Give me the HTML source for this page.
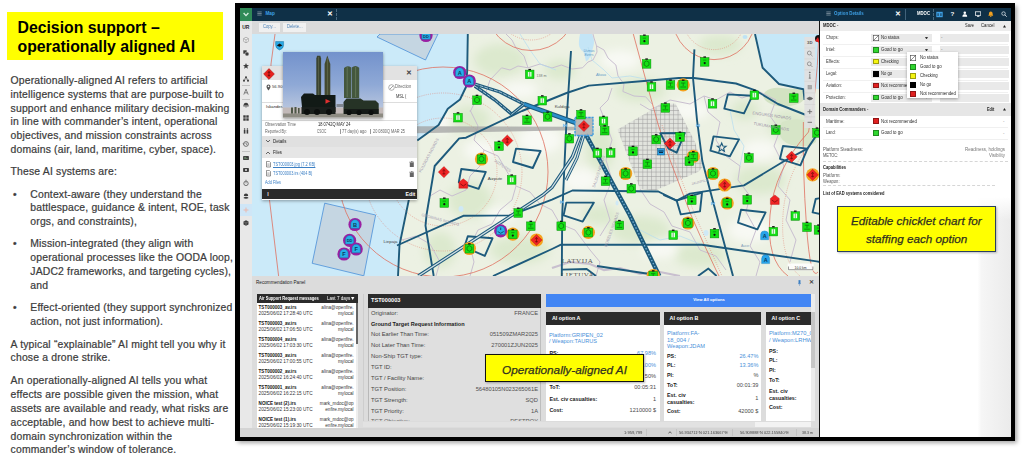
<!DOCTYPE html>
<html><head><meta charset="utf-8"><title>Decision support</title>
<style>
html,body{margin:0;padding:0;}
body{width:1024px;height:465px;overflow:hidden;background:#fff;position:relative;font-family:"Liberation Sans",sans-serif;}
.a{position:absolute;white-space:nowrap;}
#shadow{position:absolute;left:238px;top:6px;width:779px;height:437px;background:rgba(0,0,0,.35);filter:blur(2px);}
#frame{position:absolute;left:235.4px;top:3.3px;width:779.8px;height:437.4px;background:#000;}
#app{position:absolute;left:0;top:0;width:1024px;height:465px;}
#ttl{left:6.5px;top:12px;width:216px;height:48px;background:#ffff00;}
#ttl div{position:absolute;left:11px;font-weight:bold;font-size:15.8px;color:#000;white-space:nowrap;letter-spacing:0;}
.lt{position:absolute;left:10.6px;font-size:10.4px;letter-spacing:.17px;color:#3c3c3c;-webkit-text-stroke:.22px #3c3c3c;white-space:nowrap;line-height:13.85px;}
.ui{font-size:5.6px;color:#444;}

</style></head>
<body>
<div class="a" id="ttl"><div style="top:6.5px">Decision support –</div><div style="top:26px">operationally aligned AI</div></div>
<div class="a" style="left:234.600px;top:3.500px;width:0;height:437px;border-left:1px dotted #c2c2c2"></div>
<div class="lt" style="top:73.87px;left:10.6px">Operationally-aligned AI refers to artificial</div>
<div class="lt" style="top:87.72px;left:10.6px">intelligence systems that are purpose-built to</div>
<div class="lt" style="top:101.57px;left:10.6px">support and enhance military decision-making</div>
<div class="lt" style="top:115.42px;left:10.6px">in line with commander’s intent, operational</div>
<div class="lt" style="top:129.27px;left:10.6px">objectives, and mission constraints across</div>
<div class="lt" style="top:143.12px;left:10.6px">domains (air, land, maritime, cyber, space).</div>
<div class="lt" style="top:164.97px;left:10.6px">These AI systems are:</div>
<div class="lt" style="top:187.67px;left:13px">•</div>
<div class="lt" style="top:237.27px;left:13px">•</div>
<div class="lt" style="top:300.87px;left:13px">•</div>
<div class="lt" style="top:187.67px;left:30.3px">Context-aware (they understand the</div>
<div class="lt" style="top:201.47px;left:30.3px">battlespace, guidance &amp; intent, ROE, task</div>
<div class="lt" style="top:215.27px;left:30.3px">orgs, and constraints),</div>
<div class="lt" style="top:237.27px;left:30.3px">Mission-integrated (they align with</div>
<div class="lt" style="top:251.07px;left:30.3px">operational processes like the OODA loop,</div>
<div class="lt" style="top:264.87px;left:30.3px">JADC2 frameworks, and targeting cycles),</div>
<div class="lt" style="top:278.67px;left:30.3px">and</div>
<div class="lt" style="top:300.87px;left:30.3px">Effect-oriented (they support synchronized</div>
<div class="lt" style="top:314.77px;left:30.3px">action, not just information).</div>
<div class="lt" style="top:337.77px;left:10.6px">A typical “explainable” AI might tell you why it</div>
<div class="lt" style="top:351.47px;left:10.6px">chose a drone strike.</div>
<div class="lt" style="top:374.37px;left:10.6px">An operationally-aligned AI tells you what</div>
<div class="lt" style="top:388.17px;left:10.6px">effects are possible given the mission, what</div>
<div class="lt" style="top:401.97px;left:10.6px">assets are available and ready, what risks are</div>
<div class="lt" style="top:415.77px;left:10.6px">acceptable, and how best to achieve multi-</div>
<div class="lt" style="top:429.57px;left:10.6px">domain synchronization within the</div>
<div class="lt" style="top:443.37px;left:10.6px">commander’s window of tolerance.</div>
<div id="shadow"></div>
<div id="frame"></div>
<div id="app">
<svg class="a" style="left:252px;top:34px" width="568" height="242" viewBox="252 34 568 242" font-family="Liberation Sans, sans-serif">
<defs>
<pattern id="hatch" width="4.4" height="4.4" patternUnits="userSpaceOnUse"><rect width="4.4" height="4.4" fill="#dfe0dc" fill-opacity=".8"/><path d="M0 .4H4.4M.4 0V4.4" stroke="#9c9c9c" stroke-width=".55"/></pattern>
<filter id="soft" x="-20%" y="-20%" width="140%" height="140%"><feGaussianBlur stdDeviation="5"/></filter>
<g id="g"><rect x="-4.3" y="-4.1" width="8.600" height="8.600" fill="#14e014" stroke="#0a8a0a" stroke-width=".5"/><rect x="-1.300" y="-5.300" width="2.600" height="1.300" fill="#111"/></g>
<g id="gh"><use href="#g"/><path d="M0-2.800L2.400-1.400V1.400L0 2.800L-2.400 1.400V-1.400Z" fill="none" stroke="#0a6a0a" stroke-width=".7"/></g>
<g id="gw"><use href="#g"/><rect x="-1.800" y="-2.200" width="3.600" height="4.600" fill="#e8ffe8"/><path d="M0-2.200V2.400" stroke="#0a6a0a" stroke-width=".5"/></g>
<g id="gd"><use href="#g"/><circle cx="0" cy="1.400" r="1.100" fill="#111"/><path d="M-1.600-1.600H1.600" stroke="#0a6a0a" stroke-width=".6"/></g>
<g id="gt"><use href="#g"/><path d="M-2.200-1.800H2.200M0-1.800V1.200M-2.800 2.200H2.800" stroke="#0a6a0a" stroke-width=".7" fill="none"/></g>
<g id="og"><circle r="6.600" fill="#f5a21e"/></g>
<g id="rd"><path d="M0-5.600L5.600 0L0 5.600L-5.600 0Z" fill="#f02424" stroke="#b01010" stroke-width=".4"/><path d="M0-2.600V2.600M-1.400-.8L0-2.600L1.400-.8M-1.400 1.600H1.400" stroke="#7a0c0c" stroke-width=".7" fill="none"/></g>
<g id="rh"><path d="M0-5L4.400-1.600V4.400H-4.400V-1.600Z" fill="#f02424" stroke="#b01010" stroke-width=".4"/><path d="M-3 0L0 2.200L3 0" stroke="#7a0c0c" stroke-width=".8" fill="none"/></g>
<g id="pr"><circle r="6.600" fill="#9a1fa3"/><path d="M-4.200 3.800V-.6A4.200 4.200 0 0 1 4.200-.6V3.800Z" fill="#28aee8" stroke="#0d6f9a" stroke-width=".4"/></g>
<g id="ba"><path d="M-4 4.200V-.6A4 4 0 0 1 4-.6V4.200Z" fill="#28a4ea" stroke="#1580c0" stroke-width=".4"/></g>
</defs>
<rect x="252" y="34" width="568" height="242" fill="#ecf1e3"/>
<g filter="url(#soft)" fill="#dce9ce">
<ellipse cx="500" cy="60" rx="26" ry="16"/>
<ellipse cx="470" cy="120" rx="20" ry="14"/>
<ellipse cx="470" cy="200" rx="22" ry="18"/>
<ellipse cx="520" cy="250" rx="30" ry="14"/>
<ellipse cx="600" cy="150" rx="14" ry="22"/>
<ellipse cx="640" cy="90" rx="26" ry="12"/>
<ellipse cx="720" cy="45" rx="22" ry="10"/>
<ellipse cx="790" cy="125" rx="22" ry="16"/>
<ellipse cx="760" cy="180" rx="26" ry="14"/>
<ellipse cx="640" cy="230" rx="30" ry="14"/>
<ellipse cx="700" cy="255" rx="26" ry="12"/>
<ellipse cx="440" cy="250" rx="16" ry="18"/>
<ellipse cx="560" cy="70" rx="16" ry="10"/>
<ellipse cx="600" cy="215" rx="18" ry="10"/>
<ellipse cx="745" cy="110" rx="14" ry="10"/>
</g>
<g filter="url(#soft)" fill="#f8f9f4">
<ellipse cx="540" cy="140" rx="22" ry="14"/>
<ellipse cx="580" cy="180" rx="18" ry="12"/>
<ellipse cx="690" cy="110" rx="20" ry="10"/>
<ellipse cx="750" cy="230" rx="22" ry="12"/>
<ellipse cx="480" cy="150" rx="16" ry="10"/>
<ellipse cx="520" cy="90" rx="18" ry="8"/>
<ellipse cx="620" cy="60" rx="20" ry="10"/>
<ellipse cx="660" cy="250" rx="18" ry="8"/>
<ellipse cx="440" cy="120" rx="10" ry="14"/>
<ellipse cx="760" cy="150" rx="18" ry="10"/>
<ellipse cx="500" cy="215" rx="16" ry="8"/>
</g>
<path d="M765 92q6-5 16-4t18 1q8 2 6 8t-10 8q-10 3-18 1t-12-6q-3-4 0-8z" fill="#d2e2c2"/>
<path d="M782 122q10-4 22-2t14 8l-2 14q-8 6-20 4t-16-10q-2-8 2-14z" fill="#d6e5c7"/>
<path d="M252.0 34.0 L468.0 34.0 L467.2 70.0 L466.0 87.0 L460.0 99.5 L448.0 108.7 L438.6 125.0 L417.0 140.0 L411.0 170.0 L408.0 199.0 L402.0 228.0 L399.0 250.0 L397.0 276.0 L252.0 276.0Z" fill="#cbeaf9"/>
<path d="M756.0 34.0 L763.0 67.5 L779.5 83.5 L804.0 89.0 L820.0 89.0 L820.0 34.0Z" fill="#c6e8f8"/>
<path d="M580 34h12q3 6 1.500 12t-3.500 11q-2 4-4 4.500q-1-6-2.500-9.500q-4-3-4.500-7t1-11z" fill="#c4e5f6"/>
<ellipse cx="745" cy="37" rx="2.500" ry="2" fill="#bfe3f5"/><ellipse cx="706" cy="233" rx="2.500" ry="3" fill="#cfe9f6"/><ellipse cx="617" cy="203" rx="1.500" ry="2.500" fill="#cfe9f6"/><ellipse cx="461" cy="209" rx="2.500" ry="3" fill="#cfe9f6"/>
<g fill="none" stroke="#c9bfd0" stroke-width="1" stroke-linejoin="round">
<path d="M470.0 112.0 L476.0 100.0 L486.0 92.0 L490.0 80.0 L501.6 67.8 L510.0 70.0 L518.0 66.0 L528.0 67.8 L540.0 64.0 L552.0 68.0 L561.4 65.0 L572.0 69.0 L582.5 67.8 L588.0 62.0 L593.0 60.0 L597.0 52.0 L596.5 45.8 L594.0 38.0 L593.0 34.0"/>
<path d="M596.5 45.8 L604.0 50.0 L608.0 58.0 L615.9 65.0 L618.0 76.0 L624.0 84.0 L622.9 91.5 L634.0 96.0 L645.7 96.8 L652.0 104.0"/>
<path d="M528.0 67.8 L524.0 56.0 L516.0 48.0 L512.0 40.0 L506.0 34.0"/>
<path d="M612.0 88.0 L608.0 100.0 L600.0 108.0 L604.0 118.0"/>
<path d="M470.0 110.0 L478.0 126.0 L474.0 140.0 L484.0 150.0 L480.0 166.0 L470.0 176.0 L466.0 190.0 L452.0 196.0 L440.0 190.0 L430.0 196.0"/>
<path d="M484.0 150.0 L498.0 156.0 L506.0 170.0 L516.0 186.0 L512.0 200.0 L500.0 210.0 L492.0 224.0 L478.0 230.0 L470.0 246.0 L474.0 262.0 L470.0 276.0"/>
<path d="M516.0 186.0 L530.0 192.0 L540.0 204.0 L552.0 210.0 L560.0 224.0 L575.0 230.0 L590.0 250.0 L600.0 262.0 L596.0 276.0"/>
<path d="M604.0 118.0 L612.0 140.0 L606.0 160.0 L612.0 180.0 L604.0 200.0 L610.0 220.0 L600.0 236.0"/>
<path d="M640.0 104.0 L650.0 110.0 L670.0 100.0 L690.0 104.0 L704.0 96.0 L716.0 100.0 L730.0 92.0 L742.0 98.0 L760.0 92.0 L776.0 100.0"/>
<path d="M704.0 96.0 L708.0 112.0 L720.0 122.0 L716.0 140.0 L726.0 156.0 L740.0 166.0 L738.0 180.0 L750.0 196.0 L746.0 212.0 L756.0 230.0 L750.0 246.0 L760.0 262.0 L756.0 276.0"/>
<path d="M776.0 100.0 L770.0 116.0 L780.0 130.0 L774.0 146.0 L784.0 166.0 L778.0 186.0 L790.0 200.0 L786.0 220.0 L796.0 240.0 L790.0 262.0"/>
<path d="M640.0 189.0 L650.0 204.0 L664.0 212.0 L672.0 226.0 L690.0 232.0 L700.0 250.0 L716.0 256.0 L726.0 270.0"/>
<path d="M402.0 240.0 L416.0 236.0 L430.0 244.0 L440.0 262.0 L436.0 276.0"/>
</g>
<path d="M552.0 268.0 L570.0 262.0 L590.0 264.0 L604.0 270.0 L620.0 268.0 L640.0 274.0 L660.0 272.0 L680.0 276.0" fill="none" stroke="#b9a9c6" stroke-width="2.200" opacity=".7"/>
<g fill="none" stroke="#b5dcf0" stroke-width=".7">
<path d="M588.0 47.0 L592.0 60.0 L604.0 70.0 L612.0 78.0 L630.0 76.0 L650.0 80.0"/>
<path d="M520.0 34.0 L530.0 50.0 L540.0 64.0 L556.0 70.0"/>
<path d="M730.0 110.0 L734.0 130.0 L744.0 146.0 L740.0 166.0"/>
<path d="M640.0 230.0 L660.0 240.0 L680.0 236.0 L700.0 244.0"/>
</g>
<path d="M662.0 104.0 L675.5 103.5 L695.0 142.0 L703.0 167.0 L698.0 172.0 L655.0 190.5 L640.0 189.0 L617.5 129.5Z" fill="url(#hatch)"/>
<path d="M380.0 34.0 L377.0 37.0 L425.5 60.0 L438.0 34.0Z" fill="#c5d6e2" stroke="#4a8fd8" stroke-width=".8"/>
<path d="M324.7 203.2 L375.6 215.0 L363.8 275.8 L312.2 263.3Z" fill="#c5d6e2" stroke="#4a8fd8" stroke-width=".8"/>
<g fill="none" stroke="#e0705f" stroke-width=".8">
<circle cx="443" cy="172" r="105"/><circle cx="531" cy="5" r="45.500"/><circle cx="714" cy="18.600" r="41"/>
<path d="M275.0 34.0 L271.0 64.0 L269.0 130.0 L269.5 200.0 L278.6 276.0"/>
<path d="M633.3 34.0 L645.0 77.0 L658.3 125.0 L670.0 160.0 L691.0 215.0 L702.0 240.0 L716.0 270.0 L719.0 276.0"/>
<path d="M808.500 132Q774 170 770 215T788 276"/>
<path d="M818.500 42Q817 90 808.500 132"/>
<path d="M803.400 122Q802.500 170 806.500 226T818 272"/>
</g>
<g fill="none" stroke="#e0705f" stroke-width=".6" stroke-dasharray="1 1.200" opacity=".8">
<circle cx="443" cy="172" r="54"/><circle cx="443" cy="172" r="79"/><circle cx="531" cy="5" r="35"/><circle cx="714" cy="18.600" r="31"/>
<path d="M662.0 125.0 L674.0 160.0 L695.0 215.0 L706.0 240.0 L722.0 276.0"/>
<path d="M816 136Q786 170 783 215T800 276"/>
</g>
<path d="M417 126.200L575 126.800V130.200L417 133.300Z" fill="#a2a2a2" fill-opacity=".75"/>
<g fill="none" stroke="#1d5a7c" stroke-width="1.900" stroke-linejoin="round">
<path d="M467.8 34.0 L467.2 70.9 L466.0 87.0 L460.0 99.5 L447.8 108.7 L438.6 125.0 L417.3 140.4"/>
<path d="M409.0 199.0 L399.5 245.0 L398.0 276.0"/>
<path d="M806.0 115.0 L778.0 104.0 L755.4 90.3 L736.0 83.5 L694.0 78.0 L678.7 78.0 L644.0 81.0 L588.8 85.6 L566.6 93.0 L522.0 111.0 L466.0 137.7 L459.2 138.4 L434.7 166.0 L426.5 215.0 L425.5 225.7 L433.7 276.0"/>
<path d="M755.0 34.0 L762.6 67.8 L779.0 84.0 L803.4 89.3 L804.5 100.0"/>
<path d="M571.0 51.0 L566.3 125.0 L562.2 215.0 L561.8 276.0"/>
<path d="M694.4 49.4 L693.0 78.0 L697.0 120.0 L702.3 161.0 L716.6 215.0 L733.0 276.0"/>
<path d="M820.0 130.0 L807.5 148.6 L786.0 160.0 L744.0 185.4 L690.0 193.6 L676.7 200.7 L658.3 191.5 L572.4 190.5 L552.0 199.7 L510.3 215.4 L463.3 215.8 L397.0 245.5"/>
<path d="M493.0 276.0 L552.0 249.0 L561.0 244.7 L702.0 244.7 L816.7 261.4 L820.0 262.0"/>
<path d="M597.0 266.0 L648.0 273.7"/>
<path d="M562.0 269.6 L586.7 269.0 L596.0 276.0"/>
<path d="M698.0 276.0 L708.4 268.6 L716.6 276.0"/>
<path d="M663.4 195.0 L676.7 200.7"/>
<path d="M727.8 94.4 L752.3 95.8 L744.0 113.4 L724.3 108.7Z"/>
<path d="M516.0 148.6 L540.6 151.0 L532.8 168.0 L513.0 162.0Z"/>
<path d="M461.3 169.0 L485.8 172.0 L478.6 188.9 L458.8 182.3Z"/>
<path d="M713.5 136.4 L739.0 139.4 L729.9 156.4 L710.4 150.7Z"/>
<path d="M783.0 146.0 L807.5 148.6 L800.4 165.4 L780.0 158.8Z"/>
<path d="M467.8 236.3 L492.5 238.3 L484.8 255.9 L464.3 247.0Z"/>
<path d="M566.3 202.6 L593.9 202.6 L582.7 221.6 L563.6 215.4Z"/>
<path d="M741.0 209.7 L765.6 212.4 L757.4 229.3 L738.0 222.6Z"/>
<path d="M660.3 133.3 L684.8 133.0 L676.7 152.7 L668.5 148.6Z"/>
<path d="M676.7 200.7 L702.0 192.6 L700.0 211.4 L680.8 214.4Z"/>
<path d="M815.7 199.0 L830.0 196.0 L830.0 216.0 L812.6 212.4Z"/>
</g>
<path d="M721.7 143.0 L722.9 146.0 L726.1 146.2 L723.6 148.2 L724.4 151.3 L721.7 149.6 L719.0 151.3 L719.8 148.2 L717.3 146.2 L720.5 146.0Z" fill="none" stroke="#1d5a7c" stroke-width="1.100"/>
<path d="M523.8 104.0 L576.0 123.0" fill="none" stroke="#1d5a7c" stroke-width="4.8" stroke-linecap="butt"/><path d="M523.8 104.0 L576.0 123.0" fill="none" stroke="#2b8dca" stroke-width="2.4"/>
<path d="M474.8 84.0 L500.0 92.0 L523.8 104.0" fill="none" stroke="#1d5a7c" stroke-width="3.4" stroke-linecap="butt"/><path d="M474.8 84.0 L500.0 92.0 L523.8 104.0" fill="none" stroke="#a4c3d4" stroke-width="1.0" stroke-dasharray="4 1"/>
<path d="M474.8 86.0 L495.0 100.0 L511.8 114.2" fill="none" stroke="#1d5a7c" stroke-width="3.4" stroke-linecap="butt"/><path d="M474.8 86.0 L495.0 100.0 L511.8 114.2" fill="none" stroke="#a4c3d4" stroke-width="1.0" stroke-dasharray="4 1"/>
<path d="M511.8 114.2 L523.8 104.5" fill="none" stroke="#1d5a7c" stroke-width="3.4" stroke-linecap="butt"/><path d="M511.8 114.2 L523.8 104.5" fill="none" stroke="#a4c3d4" stroke-width="1.0"/>
<path d="M585.7 134.3 L629.7 215.0 L659.3 276.0" fill="none" stroke="#1d5a7c" stroke-width="4.4" stroke-linecap="butt"/><path d="M585.7 134.3 L629.7 215.0 L659.3 276.0" fill="none" stroke="#7fb6d8" stroke-width="1.2" stroke-dasharray="1.500 1.800"/>
<path d="M580.6 135.3 L572.4 156.8 L552.0 187.4 L543.0 195.0 L418.3 276.0" fill="none" stroke="#1d5a7c" stroke-width="3.4" stroke-linecap="butt"/><path d="M580.6 135.3 L572.4 156.8 L552.0 187.4 L543.0 195.0 L418.3 276.0" fill="none" stroke="#d3e0e4" stroke-width="1.3"/>
<path d="M584.0 135.0 L577.0 158.0 L566.0 180.0" fill="none" stroke="#1d5a7c" stroke-width="3" stroke-linecap="butt"/><path d="M584.0 135.0 L577.0 158.0 L566.0 180.0" fill="none" stroke="#d3e0e4" stroke-width="1.2"/>
<path d="M563.4 124.2L566.6 126.8V124.2L563.4 126.8Z" fill="#cfe8fa" stroke="#3a9be0" stroke-width=".5"/>
<path d="M696.4 124.2L699.6 126.8V124.2L696.4 126.8Z" fill="#cfe8fa" stroke="#3a9be0" stroke-width=".5"/>
<path d="M560.4 200.7L563.6 203.3V200.7L560.4 203.3Z" fill="#cfe8fa" stroke="#3a9be0" stroke-width=".5"/>
<path d="M711.4 202.2L714.6 204.8V202.2L711.4 204.8Z" fill="#cfe8fa" stroke="#3a9be0" stroke-width=".5"/>
<rect x="575" y="117.500" width="18" height="18" fill="#b4b4b4" fill-opacity=".9" stroke="#3a9be0" stroke-width="1.300" stroke-dasharray="2.500 .8"/>
<use href="#og" x="481.5" y="159.0"/>
<use href="#og" x="683.2" y="84.8"/>
<use href="#og" x="625.6" y="173.5"/>
<use href="#og" x="693.3" y="156.4"/>
<use href="#og" x="713.0" y="173.5"/>
<use href="#og" x="727.2" y="203.0"/>
<use href="#og" x="469.4" y="248.5"/>
<use href="#og" x="512.8" y="234.2"/>
<use href="#og" x="588.4" y="232.4"/>
<use href="#og" x="687.9" y="223.0"/>
<use href="#og" x="653.2" y="275.5"/>
<use href="#og" x="724.7" y="185.0"/>
<use href="#og" x="812.6" y="174.8"/>
<use href="#og" x="536.5" y="240.0"/>
<use href="#gw" x="529.7" y="74.2"/>
<use href="#gh" x="477.0" y="100.0"/>
<use href="#gw" x="458.0" y="117.5"/>
<use href="#gw" x="542.3" y="100.5"/>
<use href="#gt" x="527.0" y="120.0"/>
<use href="#gh" x="547.6" y="116.7"/>
<use href="#gt" x="581.0" y="114.5"/>
<use href="#gw" x="603.5" y="121.0"/>
<use href="#gt" x="604.7" y="130.5"/>
<use href="#gh" x="569.4" y="138.5"/>
<use href="#gd" x="499.0" y="146.0"/>
<use href="#gw" x="597.4" y="153.0"/>
<use href="#gw" x="610.7" y="152.7"/>
<use href="#gd" x="644.4" y="39.8"/>
<use href="#gh" x="646.6" y="63.7"/>
<use href="#gw" x="651.5" y="86.6"/>
<use href="#gt" x="670.5" y="84.8"/>
<use href="#gt" x="665.4" y="107.7"/>
<use href="#gd" x="704.7" y="61.7"/>
<use href="#gw" x="754.4" y="95.0"/>
<use href="#gw" x="712.5" y="103.6"/>
<use href="#gt" x="793.8" y="97.9"/>
<use href="#gw" x="511.7" y="179.7"/>
<use href="#gd" x="444.3" y="202.8"/>
<use href="#gt" x="518.2" y="212.8"/>
<use href="#gd" x="633.0" y="151.0"/>
<use href="#gt" x="647.4" y="164.0"/>
<use href="#gh" x="656.2" y="139.4"/>
<use href="#gd" x="680.0" y="136.8"/>
<use href="#gt" x="605.5" y="181.0"/>
<use href="#gh" x="631.3" y="188.5"/>
<use href="#gd" x="689.3" y="161.0"/>
<use href="#gd" x="691.8" y="200.0"/>
<use href="#gh" x="775.8" y="129.8"/>
<use href="#gh" x="748.9" y="157.8"/>
<use href="#gh" x="817.0" y="132.7"/>
<use href="#gd" x="747.2" y="199.6"/>
<use href="#gw" x="795.3" y="215.8"/>
<use href="#gt" x="530.8" y="226.0"/>
<use href="#gh" x="561.2" y="226.0"/>
<use href="#gt" x="619.4" y="225.2"/>
<use href="#gw" x="673.2" y="234.9"/>
<use href="#gd" x="714.5" y="233.4"/>
<use href="#gw" x="773.4" y="231.4"/>
<use href="#gt" x="807.0" y="227.0"/>
<use href="#gd" x="818.5" y="229.7"/>
<use href="#gh" x="481.5" y="159.0"/>
<use href="#gt" x="683.2" y="84.8"/>
<use href="#gh" x="625.6" y="173.5"/>
<use href="#gt" x="693.3" y="156.4"/>
<use href="#gh" x="713.0" y="173.5"/>
<use href="#gd" x="727.2" y="203.0"/>
<use href="#gh" x="469.4" y="248.5"/>
<use href="#gd" x="512.8" y="234.2"/>
<use href="#gh" x="588.4" y="232.4"/>
<use href="#gh" x="687.9" y="223.0"/>
<use href="#gt" x="653.2" y="275.5"/>
<use href="#rd" x="507.3" y="140.6"/>
<use href="#rd" x="443.9" y="172.1"/>
<use href="#rd" x="583.9" y="126.0"/>
<use href="#rd" x="670.0" y="143.5"/>
<use href="#rd" x="791.6" y="156.8"/>
<use href="#rd" x="724.7" y="185.0"/>
<use href="#rd" x="812.6" y="174.8"/>
<use href="#rd" x="536.5" y="240.0"/>
<use href="#rh" x="463.3" y="183.8"/>
<use href="#rh" x="774.8" y="200.0"/>
<rect x="657.500" y="148.500" width="7" height="6.500" fill="#2aa0e6" stroke="#0d4f7a" stroke-width=".5"/><path d="M658.500 151h5M659 152.500h4" stroke="#0a2a44" stroke-width="1"/>
<use href="#pr" x="426.0" y="35.5"/>
<text x="426.0" y="37.5" font-size="4" font-weight="bold" text-anchor="middle" fill="#0a3a5a">DD</text>
<use href="#pr" x="459.7" y="72.5"/>
<text x="459.7" y="74.5" font-size="5.6" font-weight="bold" text-anchor="middle" fill="#0a3a5a">A</text>
<use href="#pr" x="469.3" y="81.0"/>
<text x="469.3" y="83.0" font-size="5.6" font-weight="bold" text-anchor="middle" fill="#0a3a5a">A</text>
<use href="#pr" x="355.0" y="224.5"/>
<text x="355.0" y="226.5" font-size="5.6" font-weight="bold" text-anchor="middle" fill="#0a3a5a">B</text>
<use href="#pr" x="349.6" y="240.3"/>
<text x="349.6" y="242.3" font-size="4" font-weight="bold" text-anchor="middle" fill="#0a3a5a">DD</text>
<use href="#pr" x="356.2" y="249.0"/>
<text x="356.2" y="251.0" font-size="5.6" font-weight="bold" text-anchor="middle" fill="#0a3a5a">F</text>
<use href="#pr" x="344.0" y="254.0"/>
<text x="344.0" y="256.0" font-size="5.6" font-weight="bold" text-anchor="middle" fill="#0a3a5a">F</text>
<use href="#pr" x="500.7" y="230.8"/>
<path d="M497.700 231.500l3 1.800 3-1.800M500.700 227.500v2.500" stroke="#0a3a5a" stroke-width=".8" fill="none"/>
<use href="#ba" x="764.6" y="235.5"/>
<text x="764.6" y="237.9" font-size="5.400" font-weight="bold" text-anchor="middle" fill="#0a3a5a">A</text>
<use href="#ba" x="765.6" y="259.4"/>
<text x="765.6" y="261.8" font-size="5.400" font-weight="bold" text-anchor="middle" fill="#0a3a5a">A</text>
<path d="M275.600 41.500h8v3.500q0 3.500-4 5-4-1.500-4-5z" fill="#27a7e4" stroke="#0d5f8a" stroke-width=".4"/><path d="M276.800 45.500l2.800-2 2.800 2-2.800 1.200z" fill="#111"/>
<text x="562" y="107.5" font-size="4.4" fill="#444" text-anchor="middle" >Kuldiga</text>
<text x="495" y="179.7" font-size="4.4" fill="#444" text-anchor="middle" >Aizpute</text>
<text x="390.5" y="242.5" font-size="4.4" fill="#444" text-anchor="middle" >Liepaja</text>
<text x="589" y="52" font-size="3.6" fill="#5a9ac8" text-anchor="middle" font-style="italic">Usmas</text>
<text x="589" y="56.2" font-size="3.6" fill="#5a9ac8" text-anchor="middle" font-style="italic">Ezers</text>
<text x="601" y="75.6" font-size="3.6" fill="#5a9ac8" text-anchor="middle" font-style="italic">Abava</text>
<text x="745" y="247" font-size="3.6" fill="#7a9ab8" text-anchor="middle" >Auce</text>
<text x="541.5" y="77" font-size="3.6" fill="#777" text-anchor="middle" >138 m</text>
<text x="771.7" y="117" font-size="4.2" fill="#9a90a6" text-anchor="middle" transform="rotate(8 771.7 117)" >ENGURES NOVADS</text>
<text x="771" y="128" font-size="4.2" fill="#9a90a6" text-anchor="middle" transform="rotate(10 771 128)" >TUKUMA NOVADS</text>
<text x="430" y="156" font-size="4" fill="#a79db2" text-anchor="middle" transform="rotate(-62 430 156)" >KULDIGAS NOVADS</text>
<text x="613" y="230" font-size="4" fill="#a79db2" text-anchor="middle" transform="rotate(-70 613 230)" >DOBELES NOVADS</text>
<text x="600" y="172" font-size="4" fill="#a79db2" text-anchor="middle" transform="rotate(-72 600 172)" >SALDUS NOVADS</text>
<text x="502" y="167" font-size="4" fill="#a79db2" text-anchor="middle" transform="rotate(35 502 167)" >AIZPUTES</text>
<text x="440" y="221" font-size="4" fill="#a79db2" text-anchor="middle" transform="rotate(15 440 221)" >GROBINAS NOVADS</text>
<text x="700" y="183" font-size="3.6" fill="#a79db2" text-anchor="middle" transform="rotate(-15 700 183)" >JAUNPILS</text>
<text x="577.500" y="263" font-size="7" fill="#555" text-anchor="middle" font-family="Liberation Serif, serif" letter-spacing=".5">LATVIJA</text>
<text x="577.500" y="277" font-size="7" fill="#555" text-anchor="middle" font-family="Liberation Serif, serif" letter-spacing=".5">LIETUVA</text>
<rect x="787.700" y="263.500" width="26" height="7" fill="#fff" fill-opacity=".85"/><path d="M788.500 266.500v3.200h24.400v-3.200" fill="none" stroke="#555" stroke-width=".6"/>
<text x="800.600" y="268.600" font-size="3.400" fill="#333" text-anchor="middle">10.0 km</text>
<rect x="804.400" y="37" width="10.800" height="91" fill="#e0e0e0" fill-opacity=".95"/>
<path d="M804.400 48h10.800" stroke="#cfcfcf" stroke-width=".5"/>
<path d="M804.400 58.9h10.800" stroke="#cfcfcf" stroke-width=".5"/>
<path d="M804.400 69.8h10.800" stroke="#cfcfcf" stroke-width=".5"/>
<path d="M804.400 81.3h10.800" stroke="#cfcfcf" stroke-width=".5"/>
<path d="M804.400 92.8h10.800" stroke="#cfcfcf" stroke-width=".5"/>
<path d="M804.400 104.5h10.800" stroke="#cfcfcf" stroke-width=".5"/>
<path d="M804.400 116.8h10.800" stroke="#cfcfcf" stroke-width=".5"/>
<text x="809.800" y="44.400" font-size="4.200" font-weight="bold" fill="#555" text-anchor="middle">3D</text>
<g fill="none" stroke="#6a6a6a" stroke-width=".6"><circle cx="809.300" cy="53" r="1.900"/><path d="M810.700 54.400l1.800 1.800"/><circle cx="809.300" cy="63.800" r="1.900"/><path d="M810.700 65.200l1.800 1.800"/><path d="M809.800 74v4.200M808.800 78.200h2" stroke-width=".8"/><circle cx="809.800" cy="72.400" r=".5" fill="#555"/><rect x="808" y="85.400" width="3.600" height="3.600" fill="#aaa" stroke="#999"/><path d="M806.800 98.500q3-3 6 0q-3 3-6 0z" fill="#666"/><path d="M809.800 109.400v4.600M807.500 111.700h4.600" stroke-width=".9"/><path d="M807.600 122.300h4.400" stroke-width=".9"/></g>
<circle cx="818.500" cy="38.500" r="3.500" fill="#111"/><path d="M815 41l3-4 2 6z" fill="#e02020"/>
</svg>
<div class="a" style="left:240px;top:7.5px;width:771px;height:13px;background:#0f3047;"></div>
<div class="a" style="left:240px;top:7.5px;width:12px;height:13px;background:#2f8a57;"></div>
<svg class="a" style="left:240px;top:7.5px" width="12" height="13" viewBox="0 0 12 13"><path d="M3.6 5 L6 7.6 L8.4 5" fill="none" stroke="#d8efe2" stroke-width="1.3"/></svg>
<svg class="a" style="left:255.500px;top:10.200px" width="7" height="7" viewBox="0 0 8 8"><path d="M1.5 2.200h5M1.5 4h5M1.5 5.800h5" stroke="#cfd8de" stroke-width="0.55"/></svg>
<div class="a" style="top:10.58px;font-size:4.70px;line-height:5.64px;color:#3ea0e6;font-weight:bold;left:265.40px;">Map</div>
<div class="a" style="top:10.10px;font-size:6.5px;line-height:7.80px;color:#fff;font-weight:bold;left:326.5px;">✕</div>
<div class="a" style="left:335.5px;top:8.5px;width:0px;height:11px;background:transparent;border-left:1px dashed #4a6a80;"></div>
<div class="a" style="left:252px;top:20.5px;width:568px;height:13.5px;background:#dadada;"></div>
<div class="a" style="left:259px;top:23px;width:20.5px;height:8.5px;background:#f0f0f0;"></div>
<div class="a" style="top:24.44px;font-size:4.60px;line-height:5.52px;color:#4a7fb5;left:263.20px;transform:scaleX(0.899);transform-origin:0 50%;">Copy...</div>
<div class="a" style="left:283px;top:23px;width:23px;height:8.5px;background:#f0f0f0;"></div>
<div class="a" style="top:24.44px;font-size:4.60px;line-height:5.52px;color:#4a7fb5;left:286.90px;transform:scaleX(0.911);transform-origin:0 50%;">Delete...</div>
<div class="a" style="left:240px;top:20.5px;width:12px;height:416px;background:#e8e8e8;"></div>
<div class="a" style="left:240px;top:203.7px;width:12px;height:12px;background:#cfe6f7;"></div>
<div class="a" style="top:23.60px;font-size:5.00px;line-height:6.00px;color:#2a2a2a;font-weight:bold;left:145.80px;width:200px;text-align:center;">UR</div>
<svg class="a" style="left:241.700px;top:36.0px" width="8" height="8" viewBox="-4 -4 8 8"><path d="M0-2.800L2.400-1.400V1.400L0 2.800L-2.400 1.400V-1.400Z M-2.400-1.400L0 0L2.400-1.400M0 0V2.800" fill="#f4f4f4" stroke="#8e8e8e" stroke-width=".6"/></svg>
<svg class="a" style="left:241.700px;top:48.9px" width="8" height="8" viewBox="-4 -4 8 8"><rect x="-2.700" y="-2.700" width="3.400" height="3.400" fill="#3d3d3d"/><circle cx="1" cy="1" r="2" fill="#3d3d3d" stroke="#e8e8e8" stroke-width=".5"/></svg>
<svg class="a" style="left:241.700px;top:61.8px" width="8" height="8" viewBox="-4 -4 8 8"><path d="M0-2.900L.85-.9L3-.8L1.300.55L1.900 2.700L0 1.500L-1.900 2.700L-1.300.55L-3-.8L-.85-.9Z" fill="#3d3d3d"/></svg>
<svg class="a" style="left:241.700px;top:74.7px" width="8" height="8" viewBox="-4 -4 8 8"><circle cx="0" cy="-1.800" r="1" fill="#3d3d3d"/><circle cx="-2" cy="1.800" r="1" fill="#3d3d3d"/><circle cx="2" cy="1.800" r="1" fill="#3d3d3d"/><path d="M0-1.800V0M-2 1.800V0H2V1.800" fill="none" stroke="#3d3d3d" stroke-width=".5"/></svg>
<svg class="a" style="left:241.700px;top:87.7px" width="8" height="8" viewBox="-4 -4 8 8"><path d="M-2.200 2.600L0-2.800L2.200 2.600M-1.300.8H1.300" fill="none" stroke="#555" stroke-width=".7"/></svg>
<svg class="a" style="left:241.700px;top:101.3px" width="8" height="8" viewBox="-4 -4 8 8"><path d="M-2.400.3A2.400 2.600 0 0 1 2.400.3Z" fill="#3d3d3d"/><path d="M-2.900.9H2.900" stroke="#3d3d3d" stroke-width=".8"/><path d="M-1.800 1.600Q0 3.400 1.800 1.600Z" fill="#777"/></svg>
<svg class="a" style="left:241.700px;top:114.2px" width="8" height="8" viewBox="-4 -4 8 8"><rect x="-2.700" y="-2.700" width="2.400" height="2.400" fill="#3d3d3d"/><rect x=".3" y="-2.700" width="2.400" height="2.400" fill="#3d3d3d"/><rect x="-2.700" y=".3" width="2.400" height="2.400" fill="#3d3d3d"/><rect x=".3" y=".3" width="2.400" height="2.400" fill="#3d3d3d"/></svg>
<svg class="a" style="left:241.700px;top:127.0px" width="8" height="8" viewBox="-4 -4 8 8"><circle cx="-1.400" cy="-2" r=".8" fill="#3d3d3d"/><circle cx="1.400" cy="-2" r=".8" fill="#3d3d3d"/><rect x="-2.200" y="-1" width="1.600" height="3.600" fill="#3d3d3d"/><rect x=".6" y="-1" width="1.600" height="3.600" fill="#3d3d3d"/></svg>
<svg class="a" style="left:241.700px;top:140.2px" width="8" height="8" viewBox="-4 -4 8 8"><circle r="2.400" fill="none" stroke="#444" stroke-width=".7"/><path d="M0-1.400V0L1.200.8" fill="none" stroke="#444" stroke-width=".6"/><path d="M-3.100-.6L-2.400.4L-1.700-.6" fill="none" stroke="#444" stroke-width=".5"/></svg>
<svg class="a" style="left:241.700px;top:153.5px" width="8" height="8" viewBox="-4 -4 8 8"><rect x="-2.900" y="-1.900" width="5.800" height="3.800" rx=".4" fill="#3d3d3d"/><path d="M-1.800-.6H.2M-1.800.6H1.600" stroke="#9c9" stroke-width=".5"/></svg>
<svg class="a" style="left:241.700px;top:166.4px" width="8" height="8" viewBox="-4 -4 8 8"><rect x="-2.900" y="-2" width="5.800" height="4" rx=".7" fill="#3d3d3d"/><circle r="1" fill="#e8e8e8"/></svg>
<svg class="a" style="left:241.700px;top:179.3px" width="8" height="8" viewBox="-4 -4 8 8"><circle cy=".4" r="2.200" fill="none" stroke="#444" stroke-width=".7"/><path d="M-.7-2.700H.7M0 .4V-.9" stroke="#444" stroke-width=".6"/></svg>
<svg class="a" style="left:241.700px;top:192.2px" width="8" height="8" viewBox="-4 -4 8 8"><path d="M-2.200 0A2.200 2.400 0 0 1 2.200 0Z" fill="#3d3d3d"/><path d="M-2.700 1.900Q0-.6 2.700 1.900Q0 3.400-2.700 1.900Z" fill="#3d3d3d"/></svg>
<svg class="a" style="left:241.700px;top:205.6px" width="8" height="8" viewBox="-4 -4 8 8"><path d="M0-2.600V2.600M-2.600 0H2.600" stroke="#eab8ae" stroke-width=".7"/><circle r="1.200" fill="none" stroke="#eab8ae" stroke-width=".5"/></svg>
<svg class="a" style="left:241.700px;top:218.7px" width="8" height="8" viewBox="-4 -4 8 8"><path d="M0-2.800L2.500-1.400V1.400L0 2.800L-2.500 1.400V-1.400Z" fill="#3d3d3d"/><path d="M-2.500-1.400L0 0L2.500-1.400M0 0V2.800" fill="none" stroke="#aaa" stroke-width=".4"/></svg>
<div class="a" style="left:242px;top:84.8px;width:8px;height:0.6px;background:#c4c4c4;"></div>
<div class="a" style="left:242px;top:98.8px;width:8px;height:0.6px;background:#c4c4c4;"></div>
<div class="a" style="left:242px;top:150.6px;width:8px;height:0.6px;background:#c4c4c4;"></div>
<div class="a" style="left:261.6px;top:65.6px;width:155.4px;height:134px;background:#fff;box-shadow:0 1px 3px rgba(0,0,0,.35);"></div>
<div class="a" style="left:261.6px;top:65.6px;width:155.4px;height:14.4px;background:#e2e2e2;"></div>
<svg class="a" style="left:262.5px;top:67.5px" width="12" height="12" viewBox="0 0 12 12"><path d="M6 0.6 L11.4 6 L6 11.4 L0.6 6Z" fill="#e8201c" stroke="#a01010" stroke-width=".5"/><path d="M6 3.5v5M4.8 5l1.2-1.5L7.2 5M4.8 7.4h2.4" stroke="#5a0808" stroke-width=".7" fill="none"/></svg>
<div class="a" style="top:68.90px;font-size:6.5px;line-height:7.80px;color:#444;font-weight:bold;left:405.5px;">✕</div>
<svg class="a" style="left:265.5px;top:83.5px" width="5" height="7" viewBox="0 0 5 7"><path d="M2.5 0.4a2 2 0 0 1 2 2c0 1.6-2 4-2 4s-2-2.4-2-4a2 2 0 0 1 2-2z" fill="#555"/><circle cx="2.5" cy="2.4" r=".8" fill="#fff"/></svg>
<div class="a" style="top:84.48px;font-size:4.20px;line-height:5.04px;color:#333;left:272.00px;">56.90</div>
<svg class="a" style="left:387.5px;top:83.5px" width="7" height="7" viewBox="0 0 7 7"><circle cx="3.5" cy="3.5" r="2.8" fill="none" stroke="#777" stroke-width=".6"/><path d="M2 5 L5 2" stroke="#777" stroke-width=".7"/></svg>
<div class="a" style="top:84.24px;font-size:4.60px;line-height:5.52px;color:#666;left:395.40px;transform:scaleX(0.893);transform-origin:0 50%;">Direction</div>
<div class="a" style="top:93.74px;font-size:4.60px;line-height:5.52px;color:#333;left:396.00px;transform:scaleX(0.860);transform-origin:0 50%;">MSL (</div>
<div class="a" style="left:261.6px;top:101.5px;width:155.4px;height:0.5px;background:#ddd;"></div>
<div class="a" style="top:104.48px;font-size:4.20px;line-height:5.04px;color:#222;left:266.00px;">Iskander-</div>
<div class="a" style="left:261.6px;top:119.5px;width:155.4px;height:0.5px;background:#ddd;"></div>
<div class="a" style="top:121.84px;font-size:4.60px;line-height:5.52px;color:#666;left:265.00px;transform:scaleX(0.860);transform-origin:0 50%;">Observation Time</div>
<div class="a" style="top:121.84px;font-size:4.60px;line-height:5.52px;color:#222;left:317.60px;transform:scaleX(0.866);transform-origin:0 50%;">18 0742Q MAY 24</div>
<div class="a" style="top:128.64px;font-size:4.60px;line-height:5.52px;color:#666;left:265.00px;transform:scaleX(0.819);transform-origin:0 50%;">Reported By:</div>
<div class="a" style="top:128.64px;font-size:4.60px;line-height:5.52px;color:#666;left:317.00px;transform:scaleX(0.707);transform-origin:0 50%;">CSOC</div>
<div class="a" style="top:128.64px;font-size:4.60px;line-height:5.52px;color:#666;left:342.00px;transform:scaleX(0.867);transform-origin:0 50%;">77 day(s) ago</div>
<div class="a" style="top:128.64px;font-size:4.60px;line-height:5.52px;color:#666;left:373.00px;transform:scaleX(0.840);transform-origin:0 50%;">20 0800Q MAR 25</div>
<div class="a" style="left:340px;top:128.6px;width:0px;height:5.5px;background:transparent;border-left:.6px dashed #999"></div>
<div class="a" style="left:370px;top:128.6px;width:0px;height:5.5px;background:transparent;border-left:.6px dashed #999"></div>
<div class="a" style="left:261.6px;top:136px;width:155.4px;height:11px;background:#e0e0e0;"></div>
<div class="a" style="left:261.6px;top:147px;width:155.4px;height:11px;background:#e6e6e6;"></div>
<svg class="a" style="left:265px;top:138px" width="6" height="6" viewBox="0 0 6 6"><path d="M1 2l2 2 2-2" fill="none" stroke="#444" stroke-width=".8"/></svg>
<svg class="a" style="left:265px;top:149.5px" width="6" height="6" viewBox="0 0 6 6"><path d="M1 4l2-2 2 2" fill="none" stroke="#444" stroke-width=".8"/></svg>
<div class="a" style="top:138.54px;font-size:4.60px;line-height:5.52px;color:#222;left:272.60px;transform:scaleX(0.953);transform-origin:0 50%;">Details</div>
<div class="a" style="top:149.64px;font-size:4.60px;line-height:5.52px;color:#222;left:272.60px;transform:scaleX(0.927);transform-origin:0 50%;">Files</div>
<svg class="a" style="left:265.5px;top:161.20000000000002px" width="5" height="6.4" viewBox="0 0 5 6.4"><path d="M.5 .4h2.8l1.2 1.2v4.4h-4z" fill="#fff" stroke="#666" stroke-width=".7"/><path d="M1.3 3h2.3M1.3 4.3h2.3" stroke="#666" stroke-width=".5"/></svg>
<div class="a" style="top:161.64px;font-size:4.60px;line-height:5.52px;color:#3b7fc4;left:272.60px;text-decoration:underline;transform:scaleX(0.855);transform-origin:0 50%;">TST000003.jpg (7.2 KB)</div>
<svg class="a" style="left:408.5px;top:161.4px" width="5.5" height="6.4" viewBox="0 0 5.5 6.4"><path d="M.8 1.6h4v4.4h-4z" fill="#666"/><path d="M.3 1.2h5M2 .5h1.6" stroke="#666" stroke-width=".7"/></svg>
<svg class="a" style="left:265.5px;top:170.4px" width="5" height="6.4" viewBox="0 0 5 6.4"><path d="M.5 .4h2.8l1.2 1.2v4.4h-4z" fill="#fff" stroke="#666" stroke-width=".7"/><path d="M1.3 3h2.3M1.3 4.3h2.3" stroke="#666" stroke-width=".5"/></svg>
<div class="a" style="top:170.84px;font-size:4.60px;line-height:5.52px;color:#3b7fc4;left:272.60px;transform:scaleX(0.847);transform-origin:0 50%;">TST000003.irs (404 B)</div>
<svg class="a" style="left:408.5px;top:170.6px" width="5.5" height="6.4" viewBox="0 0 5.5 6.4"><path d="M.8 1.6h4v4.4h-4z" fill="#666"/><path d="M.3 1.2h5M2 .5h1.6" stroke="#666" stroke-width=".7"/></svg>
<div class="a" style="top:180.24px;font-size:4.60px;line-height:5.52px;color:#3b7fc4;left:265.00px;transform:scaleX(0.834);transform-origin:0 50%;">Add Files</div>
<div class="a" style="left:261.6px;top:189px;width:155.4px;height:10.4px;background:#2a2a2a;"></div>
<div class="a" style="top:190.60px;font-size:6px;line-height:7.20px;color:#fff;font-weight:bold;left:267px;">⁞</div>
<div class="a" style="top:191.08px;font-size:5.2px;line-height:6.24px;color:#fff;font-weight:bold;left:405.5px;">Edit</div>
<svg class="a" style="left:283px;top:52.300px;box-shadow:0 1px 3px rgba(0,0,0,.4)" width="100" height="65.5" viewBox="0 0 100 65.5">
<defs><linearGradient id="sky" x1="0" y1="0" x2="0" y2="1"><stop offset="0" stop-color="#7392cc"/><stop offset=".5" stop-color="#8fa9d6"/><stop offset=".85" stop-color="#b6c4de"/><stop offset="1" stop-color="#cbd0dc"/></linearGradient></defs>
<rect width="100" height="65.500" fill="url(#sky)"/>
<rect x="0" y="55.500" width="100" height="10" fill="#c2b9b8"/>
<rect x="0" y="61.500" width="100" height="4" fill="#8d8b82"/>
<path d="M33.300 43.500V6.500l.8-2.800h3.200l.8 2.800V43.500z" fill="#3a4330"/>
<path d="M35.500 5V43" stroke="#59634a" stroke-width=".8"/>
<path d="M41.600 47.500V12l2.700-8.500 3 8.500V47.500z" fill="#43492f"/>
<path d="M44.400 6V46" stroke="#606a48" stroke-width=".9"/>
<path d="M18 45l3-3.500h9l2 1.500h20.500v17H19.500z" fill="#121a16"/>
<path d="M18.500 55h34v7h-34z" fill="#1a1f1c"/>
<circle cx="24" cy="60" r="3" fill="#0c0f0e"/><circle cx="34" cy="60" r="3" fill="#0c0f0e"/><circle cx="46" cy="60" r="3" fill="#0c0f0e"/>
<path d="M61 16q3.600-3.400 7.200-.4V46H61zM68.800 15.600q3.600-3.200 7.400.2V46H68.800z" fill="#44573d"/>
<path d="M64.200 15v30M72.600 15v30" stroke="#63785a" stroke-width=".9"/>
<path d="M60.500 50l3-3.500h14l3 2h12l3.200 3v10.500H60.500z" fill="#263326"/>
<path d="M61 57h34.500v5H61z" fill="#151a17"/>
<circle cx="66" cy="60.500" r="2.600" fill="#0c0f0e"/><circle cx="76" cy="60.500" r="2.600" fill="#0c0f0e"/><circle cx="88" cy="60.500" r="2.600" fill="#0c0f0e"/>
<path d="M42.500 47l5 2.200-5 2.600z" fill="#e23030"/>
<path d="M8 55.500h2v6H8zM11.500 55h2v6.500h-2zM15 56h1.600v5.500H15z" fill="#4d5646"/>
<path d="M53.500 52h6.500v3h-6.500z" fill="#7f8690"/>
</svg>
<div class="a" style="left:252px;top:276px;width:568px;height:160.5px;background:#dcdcdc;"></div>
<div class="a" style="left:240px;top:276px;width:12px;height:160.5px;background:#e8e8e8;"></div>
<div class="a" style="top:279.82px;font-size:4.64px;line-height:5.57px;color:#222;left:256.00px;">Recommendation Panel</div>
<svg class="a" style="left:797.6px;top:279.6px" width="3" height="6.4" viewBox="0 0 4 8"><path d="M1 0h2v4l.8.8H.2L1 4zM2 4.8v3" fill="#3b7fc4" stroke="#3b7fc4" stroke-width=".5"/></svg>
<div class="a" style="top:279.40px;font-size:6.00px;line-height:7.20px;color:#444;font-weight:bold;left:809.30px;">✕</div>
<div class="a" style="left:256.6px;top:294px;width:101.8px;height:134px;background:#fff;"></div>
<div class="a" style="left:256.6px;top:294px;width:101.8px;height:9px;background:#2b2b2b;"></div>
<div class="a" style="top:295.84px;font-size:4.60px;line-height:5.52px;color:#fff;font-weight:bold;left:258.60px;transform:scaleX(0.876);transform-origin:0 50%;">Air Support Request messages</div>
<div class="a" style="top:295.84px;font-size:4.60px;line-height:5.52px;color:#fff;left:327.00px;transform:scaleX(0.995);transform-origin:0 50%;">Last 7 days</div>
<svg class="a" style="left:351.30px;top:297.30px" width="3.4" height="3" viewBox="0 0 3.4 3"><polygon points="0,0 3.4,0 1.7,3" fill="#fff"/></svg>
<div class="a" style="top:304.87px;font-size:4.55px;line-height:5.46px;color:#111;font-weight:bold;left:258.60px;">TST000003_av.irs</div>
<div class="a" style="top:311.18px;font-size:4.70px;line-height:5.64px;color:#333;left:258.60px;">2025/06/02 17:28:40 UTC</div>
<div class="a" style="top:304.84px;font-size:4.60px;line-height:5.52px;color:#333;right:670.40px;">alina@openfire.</div>
<div class="a" style="top:311.04px;font-size:4.60px;line-height:5.52px;color:#333;right:670.40px;">mylocal</div>
<div class="a" style="top:320.87px;font-size:4.55px;line-height:5.46px;color:#111;font-weight:bold;left:258.60px;">TST000003_av.irs</div>
<div class="a" style="top:327.18px;font-size:4.70px;line-height:5.64px;color:#333;left:258.60px;">2025/06/02 17:06:50 UTC</div>
<div class="a" style="top:320.84px;font-size:4.60px;line-height:5.52px;color:#333;right:670.40px;">alina@openfire.</div>
<div class="a" style="top:327.04px;font-size:4.60px;line-height:5.52px;color:#333;right:670.40px;">mylocal</div>
<div class="a" style="top:336.87px;font-size:4.55px;line-height:5.46px;color:#111;font-weight:bold;left:258.60px;">TST000004_av.irs</div>
<div class="a" style="top:343.18px;font-size:4.70px;line-height:5.64px;color:#333;left:258.60px;">2025/06/02 17:03:30 UTC</div>
<div class="a" style="top:336.84px;font-size:4.60px;line-height:5.52px;color:#333;right:670.40px;">alina@openfire.</div>
<div class="a" style="top:343.04px;font-size:4.60px;line-height:5.52px;color:#333;right:670.40px;">mylocal</div>
<div class="a" style="top:352.87px;font-size:4.55px;line-height:5.46px;color:#111;font-weight:bold;left:258.60px;">TST000003_av.irs</div>
<div class="a" style="top:359.18px;font-size:4.70px;line-height:5.64px;color:#333;left:258.60px;">2025/06/02 17:00:55 UTC</div>
<div class="a" style="top:352.84px;font-size:4.60px;line-height:5.52px;color:#333;right:670.40px;">alina@openfire.</div>
<div class="a" style="top:359.04px;font-size:4.60px;line-height:5.52px;color:#333;right:670.40px;">mylocal</div>
<div class="a" style="top:368.87px;font-size:4.55px;line-height:5.46px;color:#111;font-weight:bold;left:258.60px;">TST000002_av.irs</div>
<div class="a" style="top:375.18px;font-size:4.70px;line-height:5.64px;color:#333;left:258.60px;">2025/06/02 16:24:40 UTC</div>
<div class="a" style="top:368.84px;font-size:4.60px;line-height:5.52px;color:#333;right:670.40px;">alina@openfire.</div>
<div class="a" style="top:375.04px;font-size:4.60px;line-height:5.52px;color:#333;right:670.40px;">mylocal</div>
<div class="a" style="top:384.87px;font-size:4.55px;line-height:5.46px;color:#111;font-weight:bold;left:258.60px;">TST000001_av.irs</div>
<div class="a" style="top:391.18px;font-size:4.70px;line-height:5.64px;color:#333;left:258.60px;">2025/06/02 16:22:15 UTC</div>
<div class="a" style="top:384.84px;font-size:4.60px;line-height:5.52px;color:#333;right:670.40px;">alina@openfire.</div>
<div class="a" style="top:391.04px;font-size:4.60px;line-height:5.52px;color:#333;right:670.40px;">mylocal</div>
<div class="a" style="top:400.87px;font-size:4.55px;line-height:5.46px;color:#111;font-weight:bold;left:258.60px;">NOICE test (2).irs</div>
<div class="a" style="top:407.18px;font-size:4.70px;line-height:5.64px;color:#333;left:258.60px;">2025/06/02 15:23:00 UTC</div>
<div class="a" style="top:400.84px;font-size:4.60px;line-height:5.52px;color:#333;right:670.40px;">mark_mdoc@op</div>
<div class="a" style="top:407.04px;font-size:4.60px;line-height:5.52px;color:#333;right:670.40px;">enfire.mylocal</div>
<div class="a" style="top:416.87px;font-size:4.55px;line-height:5.46px;color:#111;font-weight:bold;left:258.60px;">NOICE test (1).irs</div>
<div class="a" style="top:423.18px;font-size:4.70px;line-height:5.64px;color:#333;left:258.60px;">2025/06/02 15:19:30 UTC</div>
<div class="a" style="top:416.84px;font-size:4.60px;line-height:5.52px;color:#333;right:670.40px;">mark_mdoc@op</div>
<div class="a" style="top:423.04px;font-size:4.60px;line-height:5.52px;color:#333;right:670.40px;">enfire.mylocal</div>
<div class="a" style="left:355.6px;top:303px;width:2.8px;height:125px;background:#eee;"></div>
<div class="a" style="left:355.8px;top:303px;width:2.4px;height:41px;background:#666;"></div>
<div class="a" style="left:363.4px;top:294px;width:0.8px;height:127px;background:#cdcdcd;"></div>
<div class="a" style="left:368px;top:294px;width:173px;height:127px;background:#dfdfdf;border-right:1px solid #bdbdbd;border-left:1px solid #b8b8b8;box-sizing:border-box;"></div>
<div class="a" style="left:368px;top:294px;width:173px;height:13.6px;background:#2b2b2b;"></div>
<div class="a" style="top:297.22px;font-size:5.63px;line-height:6.75px;color:#fff;font-weight:bold;left:371.00px;">TST000003</div>
<div class="a" style="top:309.52px;font-size:5.80px;line-height:6.96px;color:#444;left:371.00px;">Originator:</div>
<div class="a" style="top:309.55px;font-size:5.75px;line-height:6.90px;color:#4f4f4f;right:486.00px;">FRANCE</div>
<div class="a" style="top:320.57px;font-size:5.55px;line-height:6.66px;color:#1c1c1c;font-weight:bold;left:371.00px;">Ground Target Request Information</div>
<div class="a" style="top:331.32px;font-size:5.80px;line-height:6.96px;color:#444;left:371.00px;">Not Earlier Than Time:</div>
<div class="a" style="top:331.35px;font-size:5.75px;line-height:6.90px;color:#4f4f4f;right:486.00px;">051509ZMAR2025</div>
<div class="a" style="top:342.22px;font-size:5.80px;line-height:6.96px;color:#444;left:371.00px;">Not Later Than Time:</div>
<div class="a" style="top:342.25px;font-size:5.75px;line-height:6.90px;color:#4f4f4f;right:486.00px;">270001ZJUN2025</div>
<div class="a" style="top:353.12px;font-size:5.80px;line-height:6.96px;color:#444;left:371.00px;">Non-Ship TGT type:</div>
<div class="a" style="top:364.02px;font-size:5.80px;line-height:6.96px;color:#444;left:371.00px;">TGT ID:</div>
<div class="a" style="top:374.92px;font-size:5.80px;line-height:6.96px;color:#444;left:371.00px;">TGT / Facility Name:</div>
<div class="a" style="top:385.82px;font-size:5.80px;line-height:6.96px;color:#444;left:371.00px;">TGT Position:</div>
<div class="a" style="top:385.85px;font-size:5.75px;line-height:6.90px;color:#4f4f4f;right:486.00px;">56480105N023265061E</div>
<div class="a" style="top:396.72px;font-size:5.80px;line-height:6.96px;color:#444;left:371.00px;">TGT Strength:</div>
<div class="a" style="top:396.75px;font-size:5.75px;line-height:6.90px;color:#4f4f4f;right:486.00px;">SQD</div>
<div class="a" style="top:407.62px;font-size:5.80px;line-height:6.96px;color:#444;left:371.00px;">TGT Priority:</div>
<div class="a" style="top:407.65px;font-size:5.75px;line-height:6.90px;color:#4f4f4f;right:486.00px;">1A</div>
<div class="a" style="left:368px;top:417.5px;width:172px;height:3.5px;overflow:hidden"><div class="a" style="left:3px;top:0;font-size:5.8px;line-height:7px;color:#666">TGT Objective:</div><div class="a" style="right:2px;top:0;font-size:5.75px;line-height:7px;color:#5a5a5a">DESTROY</div></div>
<div class="a" style="left:363px;top:421.5px;width:448px;height:5.5px;background:#e2e2e2;"></div>
<div class="a" style="left:755px;top:421.5px;width:56px;height:5.5px;background:#f2f2f2;"></div>
<div class="a" style="left:546px;top:294px;width:265px;height:13px;background:#4285f4;"></div>
<div class="a" style="top:297.94px;font-size:4.10px;line-height:4.92px;color:#fff;font-weight:bold;left:609.00px;width:200px;text-align:center;">View All options</div>
<div class="a" style="left:546px;top:312px;width:113.6px;height:109px;background:#fff;overflow:hidden;"></div>
<div class="a" style="left:546px;top:312px;width:113.6px;height:13px;background:#2b2b2b;overflow:hidden;"></div>
<div class="a" style="top:315.38px;font-size:5.36px;line-height:6.44px;color:#fff;font-weight:bold;left:552.00px;">AI option A</div>
<div class="a" style="left:663.6px;top:312px;width:97.4px;height:109px;background:#fff;overflow:hidden;"></div>
<div class="a" style="left:663.6px;top:312px;width:97.4px;height:13px;background:#2b2b2b;overflow:hidden;"></div>
<div class="a" style="top:315.36px;font-size:5.40px;line-height:6.48px;color:#fff;font-weight:bold;left:669.60px;">AI option B</div>
<div class="a" style="left:766px;top:312px;width:45px;height:109px;background:#fff;overflow:hidden;"></div>
<div class="a" style="left:766px;top:312px;width:45px;height:13px;background:#2b2b2b;overflow:hidden;"></div>
<div class="a" style="top:315.40px;font-size:5.33px;line-height:6.39px;color:#fff;font-weight:bold;left:771.60px;">AI option C</div>
<div class="a" style="top:331.59px;font-size:5.68px;line-height:6.82px;color:#4a90d9;left:549.00px;">Platform:GRIPEN_02</div>
<div class="a" style="top:338.44px;font-size:5.60px;line-height:6.72px;color:#4a90d9;left:549.00px;">/ Weapon:TAURUS</div>
<div class="a" style="top:350.39px;font-size:5.35px;line-height:6.42px;color:#222;font-weight:bold;left:549.40px;">PS:</div>
<div class="a" style="top:350.24px;font-size:5.60px;line-height:6.72px;color:#4a90d9;right:368.00px;">67.98%</div>
<div class="a" style="top:361.72px;font-size:5.35px;line-height:6.42px;color:#222;font-weight:bold;left:549.40px;">PL:</div>
<div class="a" style="top:361.57px;font-size:5.60px;line-height:6.72px;color:#4a90d9;right:368.00px;">12.00%</div>
<div class="a" style="top:373.05px;font-size:5.35px;line-height:6.42px;color:#222;font-weight:bold;left:549.40px;">PI:</div>
<div class="a" style="top:372.90px;font-size:5.60px;line-height:6.72px;color:#4a4a4a;right:368.00px;">50%</div>
<div class="a" style="top:384.38px;font-size:5.35px;line-height:6.42px;color:#222;font-weight:bold;left:549.40px;">ToT:</div>
<div class="a" style="top:384.23px;font-size:5.60px;line-height:6.72px;color:#4a4a4a;right:368.00px;">00:05:31</div>
<div class="a" style="top:395.71px;font-size:5.35px;line-height:6.42px;color:#222;font-weight:bold;left:549.40px;">Est. civ casualties:</div>
<div class="a" style="top:395.56px;font-size:5.60px;line-height:6.72px;color:#4a4a4a;right:368.00px;">1</div>
<div class="a" style="top:407.04px;font-size:5.35px;line-height:6.42px;color:#222;font-weight:bold;left:549.40px;">Cost:</div>
<div class="a" style="top:406.89px;font-size:5.60px;line-height:6.72px;color:#4a4a4a;right:368.00px;">1210000 $</div>
<div class="a" style="top:330.08px;font-size:5.87px;line-height:7.04px;color:#4a90d9;left:667.00px;">Platform:FA-</div>
<div class="a" style="top:336.55px;font-size:5.75px;line-height:6.90px;color:#4a90d9;left:667.00px;">18_004 /</div>
<div class="a" style="top:343.00px;font-size:5.67px;line-height:6.80px;color:#4a90d9;left:667.00px;">Weapon:JDAM</div>
<div class="a" style="top:352.79px;font-size:5.35px;line-height:6.42px;color:#222;font-weight:bold;left:667.00px;">PS:</div>
<div class="a" style="top:352.64px;font-size:5.60px;line-height:6.72px;color:#4a90d9;right:265.60px;">26.47%</div>
<div class="a" style="top:362.39px;font-size:5.35px;line-height:6.42px;color:#222;font-weight:bold;left:667.00px;">PL:</div>
<div class="a" style="top:362.24px;font-size:5.60px;line-height:6.72px;color:#4a90d9;right:265.60px;">13.36%</div>
<div class="a" style="top:372.19px;font-size:5.35px;line-height:6.42px;color:#222;font-weight:bold;left:667.00px;">PI:</div>
<div class="a" style="top:372.04px;font-size:5.60px;line-height:6.72px;color:#4a4a4a;right:265.60px;">%</div>
<div class="a" style="top:382.39px;font-size:5.35px;line-height:6.42px;color:#222;font-weight:bold;left:667.00px;">ToT:</div>
<div class="a" style="top:382.24px;font-size:5.60px;line-height:6.72px;color:#4a4a4a;right:265.60px;">00:01:39</div>
<div class="a" style="top:391.79px;font-size:5.35px;line-height:6.42px;color:#222;font-weight:bold;left:667.00px;">Est. civ</div>
<div class="a" style="top:408.39px;font-size:5.35px;line-height:6.42px;color:#222;font-weight:bold;left:667.00px;">Cost:</div>
<div class="a" style="top:408.24px;font-size:5.60px;line-height:6.72px;color:#4a4a4a;right:265.60px;">42000 $</div>
<div class="a" style="top:398.79px;font-size:5.35px;line-height:6.42px;color:#222;font-weight:bold;left:667.00px;">casualties:</div>
<div class="a" style="top:395.14px;font-size:5.60px;line-height:6.72px;color:#4a4a4a;right:265.60px;">1</div>
<div class="a" style="left:766px;top:325px;width:45px;height:96px;overflow:hidden"><div class="a" style="left:3px;top:5.2px;font-size:5.75px;line-height:6.8px;color:#4a90d9;">Platform:M270_02</div><div class="a" style="left:3px;top:12.0px;font-size:5.75px;line-height:6.8px;color:#4a90d9;">/ Weapon:LRHW</div><div class="a" style="left:3px;top:22.6px;font-size:5.35px;line-height:6.8px;color:#222;font-weight:bold;">PS:</div><div class="a" style="left:3px;top:32.2px;font-size:5.35px;line-height:6.8px;color:#222;font-weight:bold;">PL:</div><div class="a" style="left:3px;top:42.0px;font-size:5.35px;line-height:6.8px;color:#222;font-weight:bold;">PI:</div><div class="a" style="left:3px;top:52.2px;font-size:5.35px;line-height:6.8px;color:#222;font-weight:bold;">ToT:</div><div class="a" style="left:3px;top:62.6px;font-size:5.35px;line-height:6.8px;color:#222;font-weight:bold;">Est. civ</div><div class="a" style="left:3px;top:69.6px;font-size:5.35px;line-height:6.8px;color:#222;font-weight:bold;">casualties:</div><div class="a" style="left:3px;top:79.2px;font-size:5.35px;line-height:6.8px;color:#222;font-weight:bold;">Cost:</div></div>
<div class="a" style="left:811px;top:294px;width:3.5px;height:127px;background:#ececec;"></div>
<div class="a" style="left:811px;top:312px;width:3.5px;height:56px;background:#c6c6c6;"></div>
<div class="a" style="left:252px;top:428px;width:568px;height:8.5px;background:#d4d4d4;"></div>
<div class="a" style="left:240px;top:428px;width:12px;height:8.5px;background:#d4d4d4;"></div>
<div class="a" style="top:429.88px;font-size:4.20px;line-height:5.04px;color:#444;left:623.60px;transform:scaleX(0.985);transform-origin:0 50%;">1:959,799</div>
<svg class="a" style="left:668px;top:431px" width="4" height="3" viewBox="0 0 4 3"><path d="M.5 2.400L2 .700L3.500 2.400" fill="none" stroke="#333" stroke-width=".7"/></svg>
<div class="a" style="top:429.88px;font-size:4.20px;line-height:5.04px;color:#444;left:679.00px;transform:scaleX(0.941);transform-origin:0 50%;">56.934711°N 021.163667°E</div>
<div class="a" style="top:429.88px;font-size:4.20px;line-height:5.04px;color:#444;left:740.00px;transform:scaleX(0.935);transform-origin:0 50%;">56.909888°N 022.155840°E</div>
<div class="a" style="top:429.88px;font-size:4.20px;line-height:5.04px;color:#444;left:802.00px;transform:scaleX(0.857);transform-origin:0 50%;">38.3 m</div>
<div class="a" style="left:646px;top:428.5px;width:0.5px;height:7.5px;background:#c4c4c4;"></div>
<div class="a" style="left:676px;top:428.5px;width:0.5px;height:7.5px;background:#c4c4c4;"></div>
<div class="a" style="left:732px;top:428.5px;width:0.5px;height:7.5px;background:#c4c4c4;"></div>
<div class="a" style="left:796px;top:428.5px;width:0.5px;height:7.5px;background:#c4c4c4;"></div>
<div class="a" style="left:485.4px;top:354.4px;width:158.2px;height:27.2px;background:#ffff00;border:1px solid #111;box-sizing:border-box;box-shadow:1px 1px 2px rgba(0,0,0,.3);"></div>
<div class="a" style="top:362.55px;font-size:11.75px;line-height:14.10px;color:#2f3020;font-style:italic;left:502.00px;-webkit-text-stroke:.25px #2f3020;">Operationally-aligned AI</div>
<div class="a" style="left:818.8px;top:20.5px;width:1.5px;height:416px;background:#151515;"></div>
<div class="a" style="left:820px;top:20.5px;width:191px;height:416px;background:linear-gradient(90deg,#fff 0,#fff 82.500%,#f6f6f6 84.500%,#f1f1f1 91%,#ebebeb 100%)"></div>
<div class="a" style="left:820px;top:20.5px;width:191px;height:200px;background:linear-gradient(#fff 0,#fff 88%,rgba(255,255,255,0) 100%);"></div>
<svg class="a" style="left:824.500px;top:10.200px" width="7" height="7" viewBox="0 0 8 8"><path d="M1.5 2.200h5M1.5 4h5M1.5 5.800h5" stroke="#cfd8de" stroke-width="0.55"/></svg>
<div class="a" style="top:10.84px;font-size:4.60px;line-height:5.52px;color:#3ea0e6;font-weight:bold;left:834.00px;transform:scaleX(0.949);transform-origin:0 50%;">Option Details</div>
<div class="a" style="top:10.10px;font-size:6.50px;line-height:7.80px;color:#fff;font-weight:bold;left:895.20px;">✕</div>
<div class="a" style="left:904.6px;top:8.5px;width:0.6px;height:11px;background:#41627a;"></div>
<div class="a" style="top:11.04px;font-size:4.60px;line-height:5.52px;color:#fff;font-weight:bold;left:917.00px;transform:scaleX(0.925);transform-origin:0 50%;">MDOC</div>
<div class="a" style="left:932.6px;top:8.5px;width:0px;height:11px;background:transparent;border-left:1px dashed #4a6a80;"></div>
<svg class="a" style="left:935.5px;top:10.5px" width="7" height="7" viewBox="0 0 7 7"><rect x=".3" y=".8" width="6.4" height="5.4" fill="#3ea0e6"/><path d="M1.3 2.2h1.6v2.8H1.3zM4.1 2.2h1.6v2.8H4.1z" fill="#0f3047" opacity=".6"/></svg>
<div class="a" style="top:10.28px;font-size:6.20px;line-height:7.44px;color:#fff;font-weight:bold;left:950.60px;">?</div>
<svg class="a" style="left:962.200px;top:10.800px" width="5.600" height="6.400" viewBox="0 0 7 8"><circle cx="3.5" cy="2.2" r="1.6" fill="#fff"/><path d="M.5 7.2c0-2.4 1.4-3 3-3s3 .6 3 3z" fill="#fff"/></svg>
<svg class="a" style="left:974.800px;top:10.800px" width="6.400" height="6.400" viewBox="0 0 8 8"><rect x=".8" y="1" width="6.4" height="4.4" fill="none" stroke="#fff" stroke-width=".9"/><path d="M2.5 7h3M4 5.4V7" stroke="#fff" stroke-width=".9"/></svg>
<svg class="a" style="left:988.300px;top:10.600px" width="5.600" height="6.400" viewBox="0 0 7 8"><path d="M3.5 .6c1.6 0 2.3 1.2 2.3 2.8 0 1.400.5 2 .9 2.400H.3c.4-.4.9-1 .9-2.400C1.2 1.800 1.900.6 3.500.600z" fill="#f0a020"/><circle cx="3.5" cy="6.800" r=".8" fill="#f0a020"/></svg>
<svg class="a" style="left:1000.800px;top:10.800px" width="6.400" height="6.400" viewBox="0 0 8 8"><circle cx="3.2" cy="3.2" r="2.2" fill="none" stroke="#e8eef2" stroke-width=".9"/><path d="M4.800 4.800L7.200 7.200" stroke="#e8eef2" stroke-width="1"/></svg>
<div class="a" style="left:820px;top:20.5px;width:191px;height:10.5px;background:#ececec;"></div>
<div class="a" style="top:23.44px;font-size:4.60px;line-height:5.52px;color:#222;font-weight:bold;left:823.00px;transform:scaleX(0.913);transform-origin:0 50%;">MDOC -</div>
<div class="a" style="top:23.44px;font-size:4.60px;line-height:5.52px;color:#222;left:965.00px;transform:scaleX(0.858);transform-origin:0 50%;">Save</div>
<div class="a" style="top:23.44px;font-size:4.60px;line-height:5.52px;color:#222;left:981.20px;transform:scaleX(0.936);transform-origin:0 50%;">Cancel</div>
<svg class="a" style="left:1002.50px;top:25.10px" width="3" height="2.6" viewBox="0 0 3 2.6"><polygon points="0,2.6 1.5,0 3,2.6" fill="#222"/></svg>
<div class="a" style="top:35.24px;font-size:4.60px;line-height:5.52px;color:#3a3a3a;left:826.00px;transform:scaleX(0.864);transform-origin:0 50%;">Chops:</div>
<div class="a" style="left:871px;top:34px;width:61px;height:8px;background:#e9e9e9;"></div>
<svg class="a" style="left:873.4px;top:35px" width="6" height="6" viewBox="0 0 6 6"><rect x=".3" y=".3" width="5.400" height="5.400" fill="#fff" stroke="#444" stroke-width=".6"/><path d="M.6 5.400L5.400.600" stroke="#444" stroke-width=".6"/></svg>
<div class="a" style="left:881.4px;top:34px;width:44px;height:8px;overflow:hidden"><div class="a" style="top:1.24px;font-size:4.60px;line-height:5.52px;color:#2a2a2a;left:0.00px;transform:scaleX(0.957);transform-origin:0 50%;">No status</div></div>
<svg class="a" style="left:925.10px;top:36.70px" width="3" height="2.6" viewBox="0 0 3 2.6"><polygon points="0,0 3,0 1.5,2.6" fill="#333"/></svg>
<div class="a" style="left:939.6px;top:34px;width:69px;height:8px;background:#e9e9e9;"></div>
<div class="a" style="top:35.30px;font-size:4.50px;line-height:5.40px;color:#777;left:941.00px;">-</div>
<div class="a" style="left:823px;top:44px;width:185px;height:0.4px;background:#f0f0f0;"></div>
<div class="a" style="top:47.24px;font-size:4.60px;line-height:5.52px;color:#3a3a3a;left:826.00px;transform:scaleX(0.943);transform-origin:0 50%;">Intel:</div>
<div class="a" style="left:871px;top:46px;width:61px;height:8px;background:#e9e9e9;"></div>
<div class="a" style="left:873.4px;top:47px;width:5.8px;height:5.8px;background:#2fd62f;border:.4px solid rgba(0,0,0,.35);box-sizing:border-box;"></div>
<div class="a" style="left:881.4px;top:46px;width:44px;height:8px;overflow:hidden"><div class="a" style="top:1.24px;font-size:4.60px;line-height:5.52px;color:#2a2a2a;left:0.00px;transform:scaleX(0.949);transform-origin:0 50%;">Good to go</div></div>
<svg class="a" style="left:925.10px;top:48.70px" width="3" height="2.6" viewBox="0 0 3 2.6"><polygon points="0,0 3,0 1.5,2.6" fill="#333"/></svg>
<div class="a" style="left:939.6px;top:46px;width:69px;height:8px;background:#e9e9e9;"></div>
<div class="a" style="top:47.30px;font-size:4.50px;line-height:5.40px;color:#777;left:941.00px;">-</div>
<div class="a" style="left:823px;top:56px;width:185px;height:0.4px;background:#f0f0f0;"></div>
<div class="a" style="top:58.94px;font-size:4.60px;line-height:5.52px;color:#3a3a3a;left:826.00px;transform:scaleX(0.918);transform-origin:0 50%;">Effects:</div>
<div class="a" style="left:871px;top:57.7px;width:61px;height:8px;background:#e9e9e9;"></div>
<div class="a" style="left:873.4px;top:58.7px;width:5.8px;height:5.8px;background:#f5f510;border:.4px solid rgba(0,0,0,.35);box-sizing:border-box;"></div>
<div class="a" style="left:881.4px;top:57.7px;width:44px;height:8px;overflow:hidden"><div class="a" style="top:1.24px;font-size:4.60px;line-height:5.52px;color:#2a2a2a;left:0.00px;transform:scaleX(0.918);transform-origin:0 50%;">Checking</div></div>
<svg class="a" style="left:925.10px;top:60.40px" width="3" height="2.6" viewBox="0 0 3 2.6"><polygon points="0,0 3,0 1.5,2.6" fill="#333"/></svg>
<div class="a" style="left:939.6px;top:57.7px;width:69px;height:8px;background:#e9e9e9;"></div>
<div class="a" style="top:59.00px;font-size:4.50px;line-height:5.40px;color:#777;left:941.00px;">-</div>
<div class="a" style="left:823px;top:67.7px;width:185px;height:0.4px;background:#f0f0f0;"></div>
<div class="a" style="top:71.24px;font-size:4.60px;line-height:5.52px;color:#3a3a3a;left:826.00px;transform:scaleX(0.878);transform-origin:0 50%;">Legal:</div>
<div class="a" style="left:871px;top:70px;width:61px;height:8px;background:#e9e9e9;"></div>
<div class="a" style="left:873.4px;top:71px;width:5.8px;height:5.8px;background:#000;border:.4px solid rgba(0,0,0,.35);box-sizing:border-box;"></div>
<div class="a" style="left:881.4px;top:70px;width:44px;height:8px;overflow:hidden"><div class="a" style="top:1.24px;font-size:4.60px;line-height:5.52px;color:#2a2a2a;left:0.00px;transform:scaleX(0.912);transform-origin:0 50%;">No go</div></div>
<svg class="a" style="left:925.10px;top:72.70px" width="3" height="2.6" viewBox="0 0 3 2.6"><polygon points="0,0 3,0 1.5,2.6" fill="#333"/></svg>
<div class="a" style="left:939.6px;top:70px;width:69px;height:8px;background:#e9e9e9;"></div>
<div class="a" style="top:71.30px;font-size:4.50px;line-height:5.40px;color:#777;left:941.00px;">-</div>
<div class="a" style="left:823px;top:80px;width:185px;height:0.4px;background:#f0f0f0;"></div>
<div class="a" style="top:82.84px;font-size:4.60px;line-height:5.52px;color:#3a3a3a;left:826.00px;transform:scaleX(0.911);transform-origin:0 50%;">Aviation:</div>
<div class="a" style="left:871px;top:81.6px;width:61px;height:8px;background:#e9e9e9;"></div>
<div class="a" style="left:873.4px;top:82.6px;width:5.8px;height:5.8px;background:#e02020;border:.4px solid rgba(0,0,0,.35);box-sizing:border-box;"></div>
<div class="a" style="left:881.4px;top:81.6px;width:44px;height:8px;overflow:hidden"><div class="a" style="top:1.24px;font-size:4.60px;line-height:5.52px;color:#2a2a2a;left:0.00px;transform:scaleX(0.951);transform-origin:0 50%;">Not recommended</div></div>
<svg class="a" style="left:925.10px;top:84.30px" width="3" height="2.6" viewBox="0 0 3 2.6"><polygon points="0,0 3,0 1.5,2.6" fill="#333"/></svg>
<div class="a" style="left:939.6px;top:81.6px;width:69px;height:8px;background:#e9e9e9;"></div>
<div class="a" style="top:82.90px;font-size:4.50px;line-height:5.40px;color:#777;left:941.00px;">-</div>
<div class="a" style="left:823px;top:91.6px;width:185px;height:0.4px;background:#f0f0f0;"></div>
<div class="a" style="top:94.74px;font-size:4.60px;line-height:5.52px;color:#3a3a3a;left:826.00px;transform:scaleX(0.891);transform-origin:0 50%;">Protection:</div>
<div class="a" style="left:871px;top:93.5px;width:61px;height:8px;background:#e9e9e9;"></div>
<div class="a" style="left:873.4px;top:94.5px;width:5.8px;height:5.8px;background:#2fd62f;border:.4px solid rgba(0,0,0,.35);box-sizing:border-box;"></div>
<div class="a" style="left:881.4px;top:93.5px;width:44px;height:8px;overflow:hidden"><div class="a" style="top:1.24px;font-size:4.60px;line-height:5.52px;color:#2a2a2a;left:0.00px;transform:scaleX(0.949);transform-origin:0 50%;">Good to go</div></div>
<svg class="a" style="left:925.10px;top:96.20px" width="3" height="2.6" viewBox="0 0 3 2.6"><polygon points="0,0 3,0 1.5,2.6" fill="#333"/></svg>
<div class="a" style="left:939.6px;top:93.5px;width:69px;height:8px;background:#e9e9e9;"></div>
<div class="a" style="top:94.80px;font-size:4.50px;line-height:5.40px;color:#777;left:941.00px;">-</div>
<div class="a" style="left:823px;top:103.5px;width:185px;height:0.4px;background:#f0f0f0;"></div>
<div class="a" style="left:820px;top:103px;width:191px;height:13px;background:#e6e6e6;"></div>
<div class="a" style="top:106.84px;font-size:4.60px;line-height:5.52px;color:#222;font-weight:bold;left:823.00px;transform:scaleX(0.902);transform-origin:0 50%;">Domain Commanders -</div>
<div class="a" style="top:106.84px;font-size:4.60px;line-height:5.52px;color:#222;font-weight:bold;left:987.40px;transform:scaleX(0.829);transform-origin:0 50%;">Edit</div>
<svg class="a" style="left:1002.50px;top:108.30px" width="3" height="2.6" viewBox="0 0 3 2.6"><polygon points="0,2.6 1.5,0 3,2.6" fill="#222"/></svg>
<div class="a" style="top:118.64px;font-size:4.60px;line-height:5.52px;color:#3a3a3a;left:826.00px;transform:scaleX(0.983);transform-origin:0 50%;">Maritime:</div>
<div class="a" style="left:873.4px;top:118.4px;width:5.8px;height:5.8px;background:#e02020;border:.4px solid rgba(0,0,0,.35);box-sizing:border-box;"></div>
<div class="a" style="top:118.64px;font-size:4.60px;line-height:5.52px;color:#2a2a2a;left:881.40px;transform:scaleX(0.951);transform-origin:0 50%;">Not recommended</div>
<div class="a" style="top:118.70px;font-size:4.50px;line-height:5.40px;color:#999;left:1003.00px;">-</div>
<div class="a" style="left:823px;top:127.4px;width:185px;height:0.4px;background:#f0f0f0;"></div>
<div class="a" style="top:130.44px;font-size:4.60px;line-height:5.52px;color:#3a3a3a;left:826.00px;transform:scaleX(0.834);transform-origin:0 50%;">Land:</div>
<div class="a" style="left:873.4px;top:130.2px;width:5.8px;height:5.8px;background:#2fd62f;border:.4px solid rgba(0,0,0,.35);box-sizing:border-box;"></div>
<div class="a" style="top:130.44px;font-size:4.60px;line-height:5.52px;color:#2a2a2a;left:881.40px;transform:scaleX(0.949);transform-origin:0 50%;">Good to go</div>
<div class="a" style="top:130.50px;font-size:4.50px;line-height:5.40px;color:#999;left:1003.00px;">-</div>
<div class="a" style="left:823px;top:139.2px;width:185px;height:0.4px;background:#f0f0f0;"></div>
<div class="a" style="top:146.64px;font-size:4.60px;line-height:5.52px;color:#555;left:823.40px;transform:scaleX(0.942);transform-origin:0 50%;">Platform Steadiness:</div>
<div class="a" style="top:146.64px;font-size:4.60px;line-height:5.52px;color:#777;left:965.00px;transform:scaleX(0.966);transform-origin:0 50%;">Readiness, holdings</div>
<div class="a" style="top:153.24px;font-size:4.60px;line-height:5.52px;color:#555;left:823.40px;transform:scaleX(0.854);transform-origin:0 50%;">METOC:</div>
<div class="a" style="top:153.24px;font-size:4.60px;line-height:5.52px;color:#777;left:989.00px;transform:scaleX(0.968);transform-origin:0 50%;">Visibility</div>
<div class="a" style="left:823px;top:161px;width:185px;height:0px;background:transparent;border-top:.5px dashed #d6d6d6"></div>
<div class="a" style="top:164.64px;font-size:4.60px;line-height:5.52px;color:#222;font-weight:bold;left:823.40px;transform:scaleX(0.891);transform-origin:0 50%;">Capabilities</div>
<div class="a" style="top:172.84px;font-size:4.60px;line-height:5.52px;color:#555;left:823.40px;transform:scaleX(0.956);transform-origin:0 50%;">Platform:</div>
<div class="a" style="top:178.84px;font-size:4.60px;line-height:5.52px;color:#555;left:823.40px;transform:scaleX(0.906);transform-origin:0 50%;">Weapon:</div>
<div class="a" style="left:823px;top:185px;width:172px;height:0px;background:transparent;border-top:.5px dashed #d6d6d6"></div>
<div class="a" style="top:191.24px;font-size:4.60px;line-height:5.52px;color:#222;font-weight:bold;left:823.40px;transform:scaleX(0.876);transform-origin:0 50%;">List of EAD systems considered</div>
<div class="a" style="left:907px;top:52.4px;width:51.4px;height:45.6px;background:#fff;box-shadow:0 1px 3px rgba(0,0,0,.35);"></div>
<svg class="a" style="left:910px;top:54.6px" width="6" height="6" viewBox="0 0 6 6"><rect x=".3" y=".3" width="5.400" height="5.400" fill="#fff" stroke="#444" stroke-width=".6"/><path d="M.6 5.400L5.400.600" stroke="#444" stroke-width=".6"/></svg>
<div class="a" style="top:54.84px;font-size:4.60px;line-height:5.52px;color:#2a2a2a;left:919.60px;transform:scaleX(0.957);transform-origin:0 50%;">No status</div>
<div class="a" style="left:910px;top:64px;width:5.8px;height:5.8px;background:#2fd62f;border:.4px solid rgba(0,0,0,.35);box-sizing:border-box;"></div>
<div class="a" style="top:64.24px;font-size:4.60px;line-height:5.52px;color:#2a2a2a;left:919.60px;transform:scaleX(0.949);transform-origin:0 50%;">Good to go</div>
<div class="a" style="left:910px;top:73px;width:5.8px;height:5.8px;background:#f5f510;border:.4px solid rgba(0,0,0,.35);box-sizing:border-box;"></div>
<div class="a" style="top:73.24px;font-size:4.60px;line-height:5.52px;color:#2a2a2a;left:919.60px;transform:scaleX(0.918);transform-origin:0 50%;">Checking</div>
<div class="a" style="left:910px;top:82px;width:5.8px;height:5.8px;background:#000;border:.4px solid rgba(0,0,0,.35);box-sizing:border-box;"></div>
<div class="a" style="top:82.24px;font-size:4.60px;line-height:5.52px;color:#2a2a2a;left:919.60px;transform:scaleX(0.912);transform-origin:0 50%;">No go</div>
<div class="a" style="left:910px;top:90.8px;width:5.8px;height:5.8px;background:#e02020;border:.4px solid rgba(0,0,0,.35);box-sizing:border-box;"></div>
<div class="a" style="top:91.04px;font-size:4.60px;line-height:5.52px;color:#2a2a2a;left:919.60px;transform:scaleX(0.951);transform-origin:0 50%;">Not recommended</div>
<div class="a" style="left:837.4px;top:206px;width:158.6px;height:46px;background:#ffff00;border:1px solid #2a3f5f;box-sizing:border-box;box-shadow:1px 1px 2px rgba(0,0,0,.25);"></div>
<div class="a" style="top:214.39px;font-size:11.69px;line-height:14.03px;color:#2f3020;font-style:italic;left:851.00px;-webkit-text-stroke:.25px #2f3020;">Editable chicklet chart for</div>
<div class="a" style="top:232.38px;font-size:11.70px;line-height:14.04px;color:#2f3020;font-style:italic;left:816.70px;width:200px;text-align:center;-webkit-text-stroke:.25px #2f3020;">staffing each option</div>
</div>
</body></html>
